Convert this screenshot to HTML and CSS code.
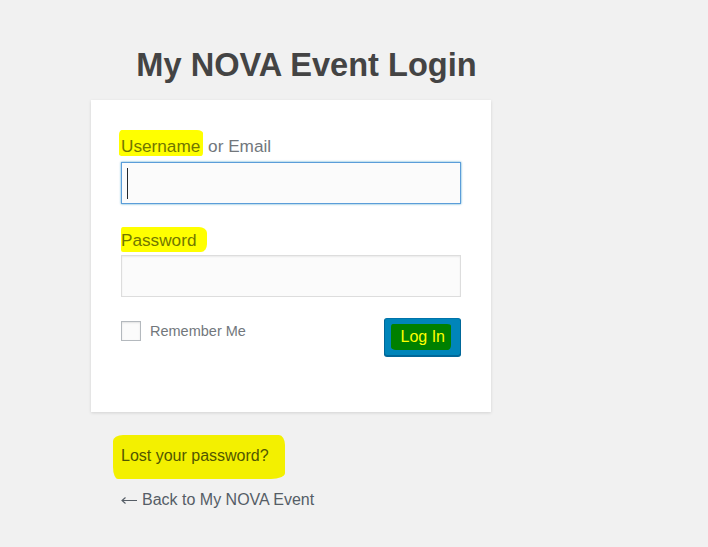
FILE: index.html
```html
<!DOCTYPE html>
<html>
<head>
<meta charset="utf-8">
<title>My NOVA Event Login</title>
<link rel="stylesheet" href="styles.css">
</head>
<body>
<div class="login">
  <h1 class="title">My NOVA Event Login</h1>
  <form class="card">
    <label class="label"><span class="hl hl-user">Username</span> or Email</label>
    <div class="field focused"><span class="caret"></span></div>
    <label class="label label-pass"><span class="hl hl-pass">Password</span></label>
    <div class="field"></div>
    <div class="actions">
      <label class="remember"><span class="checkbox"></span>Remember Me</label>
      <button type="button" class="btn"><span class="hl-btn">Log In</span></button>
    </div>
  </form>
  <nav class="links">
    <a class="link lost" href="#"><span class="hl-lost">Lost your password?</span></a>
    <a class="link back" href="#"><svg class="arrow" width="16" height="9" viewBox="0 0 16 9" aria-hidden="true"><path d="M1 4.5H16M4.5 1.5L1 4.5L4.5 7.5" fill="none" stroke="#555d66" stroke-width="1.1"/></svg>Back to My NOVA Event</a>
  </nav>
</div>
</body>
</html>
```

FILE: styles.css
```css
html, body {
  margin: 0;
  padding: 0;
  background: #f1f1f1;
  font-family: "Liberation Sans", Arial, sans-serif;
}

.login {
  width: 400px;
  margin-left: 91px;
  display: flex;
  flex-direction: column;
}

.title {
  margin: 46px 0 16px;
  padding-left: 31px;
  text-align: center;
  font-size: 32.6px;
  line-height: 38px;
  font-weight: bold;
  color: #444;
}

.card {
  background: #fff;
  box-shadow: 0 1px 3px rgba(0, 0, 0, 0.13);
  padding: 36px 30px 56px;
  display: flex;
  flex-direction: column;
}

.label {
  font-size: 17.2px;
  line-height: 20px;
  color: #72777c;
  margin-bottom: 6px;
}

.label-pass {
  margin-top: 26px;
  margin-bottom: 5px;
}

.hl {
  color: #727700;
  background: #ffff00;
}

.hl-user {
  margin-left: -2px;
  padding: 6px 3px 0 2px;
  border-radius: 3px 6px 2px 4px / 5px 3px 4px 2px;
}

.hl-pass {
  padding: 3px 11px 2px 0;
  border-radius: 2px 8px 6px 2px / 3px 6px 8px 2px;
}

.field {
  height: 42px;
  box-sizing: border-box;
  border: 1px solid #ddd;
  background: #fbfbfb;
  box-shadow: inset 0 1px 2px rgba(0, 0, 0, 0.07);
  display: flex;
  align-items: center;
  padding-left: 5px;
}

.field.focused {
  border-color: #5b9dd9;
  box-shadow: 0 0 2px rgba(30, 140, 190, 0.8);
}

.caret {
  width: 1px;
  height: 31px;
  margin-top: 1px;
  background: #23282d;
}

.actions {
  margin-top: 21px;
  display: flex;
  justify-content: space-between;
  align-items: flex-start;
}

.remember {
  display: flex;
  align-items: center;
  gap: 9px;
  margin-top: 3px;
  font-size: 14.5px;
  line-height: 20px;
  color: #72777c;
}

.checkbox {
  width: 20px;
  height: 20px;
  box-sizing: border-box;
  border: 1px solid #b4b9be;
  background: #fbfbfb;
  box-shadow: inset 0 1px 2px rgba(0, 0, 0, 0.1);
}

.btn {
  height: 38px;
  padding: 0 15px 0 16px;
  border: 1px solid #0073aa;
  border-color: #0073aa #006799 #006799;
  border-radius: 3px;
  background: #0085ba;
  box-shadow: 0 1px 0 #006799;
  font-family: "Liberation Sans", Arial, sans-serif;
  font-size: 16px;
  line-height: 36px;
  color: #fff;
}

.hl-btn {
  color: #ffff00;
  background: #008000;
  padding: 4px 6px 5px 10px;
  margin-left: -10px;
  margin-right: -6px;
  border-radius: 2px 4px 3px 5px / 3px 2px 5px 3px;
}

.links {
  padding: 34px 30px 0;
  display: flex;
  flex-direction: column;
  gap: 24px;
}

.link {
  font-size: 16px;
  line-height: 20px;
  color: #555d66;
  text-decoration: none;
}

.arrow {
  margin-right: 5px;
  vertical-align: 0;
}

.hl-lost {
  color: #515700;
  background: #f3f000;
  padding: 12px 16px 15px 8px;
  margin-left: -8px;
  border-radius: 10px 6px 14px 5px / 6px 10px 6px 12px;
}
```
